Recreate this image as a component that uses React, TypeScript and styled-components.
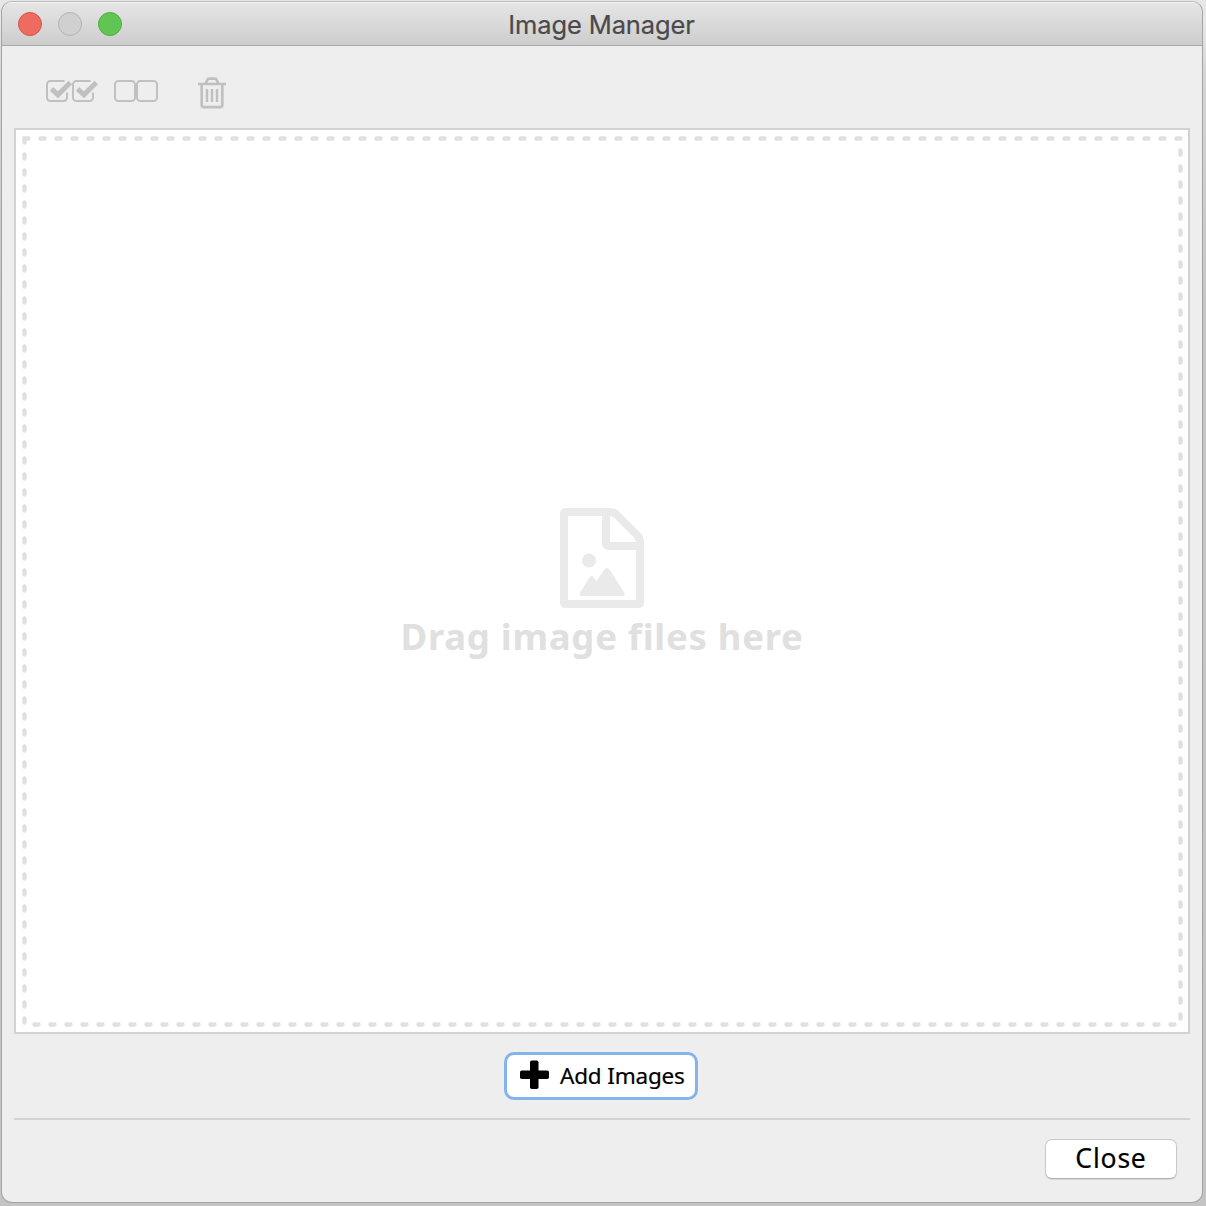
import React from "react";
import styled, { createGlobalStyle } from "styled-components";

const Global = createGlobalStyle`
  *, *::before, *::after { box-sizing: border-box; }
  html, body { margin: 0; padding: 0; }
  body { width: 1206px; height: 1206px; overflow: hidden; }
`;

const Desktop = styled.div`
  width: 1206px;
  height: 1206px;
  padding: 1px 3px 3px 1px;
  background: linear-gradient(180deg, #e6e6e6 0, #e9e9e9 20px, #d6d6d6 70px, #c6c6c6 300px, #c4c4c4 100%);
`;

const Window = styled.main`
  width: 1202px;
  height: 1202px;
  display: flex;
  flex-direction: column;
  overflow: hidden;
  border: 1px solid #a4a4a4;
  border-top-color: #bcbcbc;
  border-radius: 11px;
  background: #eeeeee;
  color: #000;
  font-family: "Noto Sans", "Open Sans", sans-serif;
`;

const TitleBar = styled.header`
  height: 44px;
  flex: none;
  display: grid;
  grid-template-columns: 140px 1fr 140px;
  align-items: center;
  border-top: 1px solid #f3f3f3;
  border-bottom: 1px solid #a8a8a8;
  background: linear-gradient(180deg, #e5e5e5, #cdcdcd);
`;

const Lights = styled.div`
  display: flex;
  gap: 16px;
  padding-left: 16px;
`;

const Light = styled.span<{ $fill: string; $edge: string }>`
  width: 24px;
  height: 24px;
  border-radius: 50%;
  border: 1px solid ${(p) => p.$edge};
  background: ${(p) => p.$fill};
`;

const Title = styled.h1`
  margin: 0;
  padding: 2px 1px 0 0;
  text-align: center;
  font: 400 25.5px/32px Inter, Roboto, sans-serif;
  letter-spacing: -0.12px;
  color: #4a4a4a;
  -webkit-text-stroke: 0.2px #4a4a4a;
`;

const Toolbar = styled.div`
  height: 82px;
  flex: none;
  display: flex;
  align-items: flex-start;
  padding: 30px 0 0 43px;
`;

const Tool = styled.button<{ $gap?: number }>`
  display: block;
  padding: 0;
  margin-right: ${(p) => p.$gap ?? 0}px;
  border: 0;
  background: none;
  color: #c0c0c0;
  svg { display: block; }
`;

const DropZone = styled.section`
  width: 1176px;
  height: 906px;
  flex: none;
  margin-left: 12px;
  display: grid;
  border: 2px solid #d2d2d2;
  background: #fff;
  > * { grid-area: 1 / 1; }
`;

const Hint = styled.div`
  display: flex;
  flex-direction: column;
  align-items: center;
  padding-top: 378px;
  svg { display: block; }
`;

const HintText = styled.p`
  margin: 1px 0 0;
  font-size: 36.5px;
  line-height: 54px;
  font-weight: 700;
  letter-spacing: 0.72px;
  white-space: nowrap;
  color: #e0e0e0;
`;

const AddRow = styled.div`
  height: 84px;
  flex: none;
  display: flex;
  justify-content: center;
  align-items: flex-start;
  padding: 18px 2px 0 0;
`;

const AddButton = styled.button`
  width: 194px;
  height: 48px;
  display: flex;
  align-items: center;
  gap: 11px;
  padding: 0 0 2px 13px;
  border: 3px solid #84b4ea;
  border-radius: 10px;
  background: #fff;
  color: #000;
  font: 400 22.5px/30px "Noto Sans", sans-serif;
  letter-spacing: -0.18px;
  white-space: nowrap;
  -webkit-text-stroke: 0.2px #000;
  svg { margin-top: -1px; }
`;

const AddLabel = styled.span`
  padding-top: 2px;
`;

const Footer = styled.footer`
  flex: 1;
  margin: 0 12px;
  display: flex;
  justify-content: flex-end;
  align-items: flex-start;
  padding: 19px 13px 0 0;
  border-top: 2px solid #d2d2d2;
`;

const CloseButton = styled.button`
  width: 132px;
  height: 40px;
  padding: 0 0 3px;
  border: 1px solid #c9c9c9;
  border-bottom-color: #b2b2b2;
  border-radius: 7px;
  background: #fff;
  color: #000;
  box-shadow: 0 1px 1px rgba(0, 0, 0, 0.1);
  font: 400 26.5px/36px "Noto Sans", sans-serif;
  letter-spacing: 0.8px;
  -webkit-text-stroke: 0.2px #000;
`;

const CheckAllIcon = () => (
  <svg width="53" height="32" viewBox="45 76 53 32" fill="none" stroke="currentColor">
    {[0, 26].map((x) => (
      <g key={x} transform={`translate(${x} 0)`}>
        <path d="M64.500 81H50.500A3.500 3.500 0 0 0 47 84.500V97.500A3.500 3.500 0 0 0 50.500 101H63.500A3.500 3.500 0 0 0 67 97.500V92.500" strokeWidth="2" />
        <path d="M51.500 88.800L58 94.800L70.300 82.500" strokeWidth="5" />
      </g>
    ))}
  </svg>
);

const UncheckAllIcon = () => (
  <svg width="46" height="32" viewBox="113 76 46 32" fill="none" stroke="currentColor" strokeWidth="2">
    <rect x="115" y="81" width="20" height="20" rx="3.500" />
    <rect x="137" y="81" width="20" height="20" rx="3.500" />
  </svg>
);

const TrashIcon = () => (
  <svg width="28" height="33" viewBox="198 76 28 33" fill="none" stroke="currentColor">
    <path d="M198 84H226" strokeWidth="2.400" />
    <path d="M205.500 84L207.300 80Q208 78.700 209.200 78.700H214.800Q216 78.700 216.700 80L218.500 84" strokeWidth="2.800" />
    <path d="M201.700 84V105Q201.700 107.100 203.800 107.100H220.200Q222.300 107.100 222.300 105V84" strokeWidth="2.700" />
    <path d="M207 89V102M212 89V102M217 89V102" strokeWidth="2.500" />
  </svg>
);

const ImageFileIcon = () => (
  <svg width="84" height="100" viewBox="0 0 84 100" fill="none" stroke="#eaeaea" strokeWidth="8" strokeLinejoin="round">
    <path d="M4 6Q4 4 6 4H50Q54 4 57 7L76 26Q80 30 80 34V94Q80 96 78 96H6Q4 96 4 94Z" />
    <path d="M46 4V35Q46 38 49 38H80" />
    <circle cx="29" cy="52.500" r="7" fill="#eaeaea" stroke="none" />
    <path d="M20 88V85L29 70Q31.500 66 34 70L36.500 73L44 62Q47 58 50 62L64.500 85V88Z" fill="#eaeaea" stroke="none" />
  </svg>
);

const PlusIcon = () => (
  <svg width="29" height="29" viewBox="0 0 29 29">
    <rect x="10" y="0.500" width="8.500" height="28.500" rx="1.800" />
    <rect x="0" y="10.500" width="29" height="8.500" rx="1.800" />
  </svg>
);

export default function App() {
  return (
    <Desktop>
      <Global />
      <Window>
        <TitleBar>
          <Lights>
            <Light $fill="#ed6b5f" $edge="#dc5248" />
            <Light $fill="#d0d0d0" $edge="#b3b3b3" />
            <Light $fill="#61c554" $edge="#4dad3d" />
          </Lights>
          <Title>Image Manager</Title>
        </TitleBar>
        <Toolbar>
          <Tool $gap={15} aria-label="Select all"><CheckAllIcon /></Tool>
          <Tool $gap={39} aria-label="Select none"><UncheckAllIcon /></Tool>
          <Tool aria-label="Delete"><TrashIcon /></Tool>
        </Toolbar>
        <DropZone>
          <svg width="1172" height="902" fill="none" stroke="#e0e0e0" strokeWidth="4.400" strokeLinecap="round" strokeDasharray="4 12">
            <path d="M8.500 8.500H1164.500V894.500H8.500Z" />
          </svg>
          <Hint>
            <ImageFileIcon />
            <HintText>Drag image files here</HintText>
          </Hint>
        </DropZone>
        <AddRow>
          <AddButton><PlusIcon /><AddLabel>Add Images</AddLabel></AddButton>
        </AddRow>
        <Footer>
          <CloseButton>Close</CloseButton>
        </Footer>
      </Window>
    </Desktop>
  );
}
